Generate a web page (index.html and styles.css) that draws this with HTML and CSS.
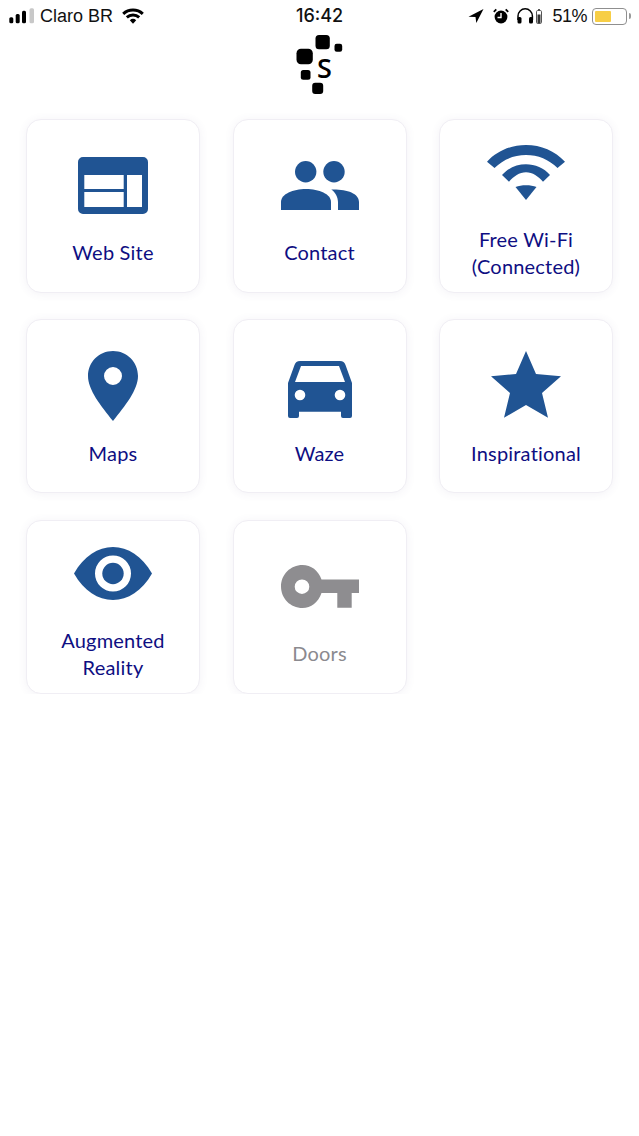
FILE: index.html
```html
<!DOCTYPE html>
<html lang="en">
<head>
  <meta charset="UTF-8" />
  <meta name="viewport" content="width=device-width, initial-scale=1.0"/>
  <title>Home</title>
  <link rel="stylesheet" href="styles.css">
</head>
<body>
  <div class="statusbar">
    <div class="status-left">
      <svg class="signal" width="25" height="16" viewBox="0 0 25 16">
        <rect x="0.300" y="9.300" width="4" height="6" rx="1.500" fill="#000"/>
        <rect x="6.700" y="6" width="4" height="9.300" rx="1.500" fill="#000"/>
        <rect x="13" y="2.700" width="4" height="12.600" rx="1.500" fill="#000"/>
        <rect x="20.500" y="0.300" width="4.500" height="15" rx="1.500" fill="#c8c8c8"/>
      </svg>
      <span class="carrier">Claro BR</span>
      <svg class="status-wifi" width="22" height="16" viewBox="0 0 22 16">
        <path d="M1.200 5.800a14.500 14.500 0 0 1 19.600 0" fill="none" stroke="#000" stroke-width="3"/>
        <path d="M4.800 9.400a9.200 9.200 0 0 1 12.400 0" fill="none" stroke="#000" stroke-width="3"/>
        <path d="M7.800 12.300a4.800 4.800 0 0 1 6.400 0L11 15.800z" fill="#000"/>
      </svg>
    </div>
    <div class="clock">16:42</div>
    <div class="status-right">
      <svg class="arrow" width="16" height="16" viewBox="0 0 16 16"><path d="M15.500 1 .5 8.700l7 .3.800 6z" fill="#000"/></svg>
      <svg class="alarm" width="16" height="16" viewBox="0 0 16 16">
        <circle cx="8" cy="9" r="6.400" fill="#000"/>
        <path d="M8 5v4.500H4.500" fill="none" stroke="#fff" stroke-width="1.400"/>
        <path d="M.8 3.800 3.300 1.300M15.200 3.800 12.700 1.300" stroke="#000" stroke-width="1.800"/>
      </svg>
      <svg class="phones" width="25" height="16" viewBox="0 0 25 16">
        <path d="M1 12V8a7.200 7.200 0 0 1 14.400 0v4" fill="none" stroke="#000" stroke-width="1.500"/>
        <rect x="0.500" y="9" width="4" height="6.500" rx="1.500" fill="#000"/>
        <rect x="12" y="9" width="4" height="6.500" rx="1.500" fill="#000"/>
        <rect x="19.500" y="2.500" width="5" height="13" rx="1.200" fill="none" stroke="#555" stroke-width="1"/>
        <rect x="21" y="1" width="2" height="1.500" fill="#555"/>
        <rect x="20.500" y="6.500" width="3" height="8.500" fill="#333"/>
      </svg>
      <span class="percent">51%</span>
      <div class="battery"><div class="battery-fill"></div></div>
      <div class="battery-cap"></div>
    </div>
  </div>

  <div class="logo">
    <svg width="50" height="62" viewBox="0 0 50 62">
      <rect x="20.500" y="1" width="14.300" height="14.300" rx="3.500" fill="#000"/>
      <rect x="39.500" y="9.700" width="7.700" height="8" rx="2.200" fill="#000"/>
      <rect x="1.500" y="14.700" width="16.300" height="15.600" rx="4.500" fill="#000"/>
      <rect x="5.800" y="36" width="9.700" height="9.700" rx="2.500" fill="#000"/>
      <rect x="17.200" y="48.700" width="11" height="11.300" rx="3" fill="#000"/>
      <text x="29.500" y="43.700" class="logo-s">S</text>
    </svg>
  </div>

  <div class="grid">
    <div class="tile">
      <div class="tile-icon">
        <svg width="70" height="57" viewBox="0 0 70 57">
          <path fill-rule="evenodd" d="M5 0h60a5 5 0 0 1 5 5v47a5 5 0 0 1-5 5H5a5 5 0 0 1-5-5V5a5 5 0 0 1 5-5zM6.300 18v14h39.400V18zM6.300 35v15h39.400V35zM49 18v32h15V18z" fill="#205493"/>
        </svg>
      </div>
      <div class="tile-label">Web Site</div>
    </div>
    <div class="tile">
      <div class="tile-icon">
        <svg width="78" height="49" viewBox="0 0 78 49">
          <circle cx="24.700" cy="10.700" r="10.700" fill="#205493"/>
          <circle cx="53" cy="10.700" r="10.700" fill="#205493"/>
          <path d="M0 49V41C0 33 12 28 25 28S50 33 50 41V49z" fill="#205493"/>
          <path d="M50.300 28.500C65 28 78 32 78 41V49H57V41C57 36 54 31 50.300 28.500z" fill="#205493"/>
        </svg>
      </div>
      <div class="tile-label">Contact</div>
    </div>
    <div class="tile tile-two">
      <div class="tile-icon">
        <svg width="78" height="55" viewBox="0 0 78 55">
          <path d="M0 16.700C10 6 24 0 39 0s29 6 39 16.700L70.500 23C62 14.500 51 10 39 10S16 14.500 7.500 23z" fill="#205493"/>
          <path d="M15 30C21 23 30 19.300 39 19.300S57 23 63 30l-7 6.700C51.500 31.500 45.500 27.300 39 27.300s-12.500 4.200-17 9.400z" fill="#205493"/>
          <path d="M28.500 42c3-1.200 6.500-1.800 10.500-1.800s7.500.6 10.500 1.800L39 55z" fill="#205493"/>
        </svg>
      </div>
      <div class="tile-label">Free Wi-Fi<br>(Connected)</div>
    </div>

    <div class="tile">
      <div class="tile-icon">
        <svg width="50" height="70" viewBox="0 0 50 70">
          <path fill-rule="evenodd" d="M25 0c14 0 25 11 25 25 0 14-13 30-25 45C13 55 0 39 0 25 0 11 11 0 25 0zM25 16a9 9 0 1 0 0 18 9 9 0 0 0 0-18z" fill="#205493"/>
        </svg>
      </div>
      <div class="tile-label">Maps</div>
    </div>
    <div class="tile">
      <div class="tile-icon">
        <svg width="64" height="64" viewBox="0 -7 64 64">
          <path fill-rule="evenodd" d="M12 0h40c3 0 4.500 1.500 5.500 4L64 22v33a2 2 0 0 1-2 2h-7a2 2 0 0 1-2-2v-4.300H11V55a2 2 0 0 1-2 2H2a2 2 0 0 1-2-2V22L6.500 4C7.500 1.500 9 0 12 0zM13 5 7 21h50L51 5zM12 28.700a5.300 5.300 0 1 0 0 10.600 5.300 5.300 0 0 0 0-10.600zM52 28.700a5.300 5.300 0 1 0 0 10.600 5.300 5.300 0 0 0 0-10.600z" fill="#205493"/>
        </svg>
      </div>
      <div class="tile-label">Waze</div>
    </div>
    <div class="tile">
      <div class="tile-icon">
        <svg width="70" height="70" viewBox="0 0 70 70">
          <path d="M35 0l10 23 25 2.300L51 42l6 24.700L35 54 13 66.700 19 42 0 25.300 25 23z" fill="#205493"/>
        </svg>
      </div>
      <div class="tile-label">Inspirational</div>
    </div>

    <div class="tile tile-two">
      <div class="tile-icon">
        <svg width="78" height="53" viewBox="0 0 78 53">
          <path fill-rule="evenodd" d="M0 26.500C10 9 24 0 39 0s29 9 39 26.500C68 44 54 53 39 53S10 44 0 26.500zM39 8.500a18 18 0 1 0 0 36 18 18 0 0 0 0-36z" fill="#205493"/>
          <circle cx="39" cy="26.500" r="10.700" fill="#205493"/>
        </svg>
      </div>
      <div class="tile-label">Augmented<br>Reality</div>
    </div>
    <div class="tile tile-off">
      <div class="tile-icon">
        <svg width="78" height="43" viewBox="0 0 78 43">
          <path fill-rule="evenodd" d="M21.500 0C30 0 37.500 5.500 40.500 14.400H78V28h-7.300v14.700H56.300V28H40.500C37.500 37 30 43 21.500 43 9.500 43 0 33.500 0 21.500S9.500 0 21.500 0zM21 14.400a7.300 7.300 0 1 0 0 14.600 7.300 7.300 0 0 0 0-14.600z" fill="#8e8d90"/>
        </svg>
      </div>
      <div class="tile-label">Doors</div>
    </div>
  </div>
</body>
</html>
```

FILE: styles.css
```css
body {
  margin: 0;
  padding: 0;
  background: #fff;
  font-family: "Lato", "Noto Sans", sans-serif;
}

.statusbar {
  height: 32px;
  padding: 0 8px 0 9px;
  display: flex;
  align-items: center;
  justify-content: space-between;
  font-family: "Liberation Sans", sans-serif;
  font-size: 18px;
  color: #111;
  position: relative;
}

.status-left, .status-right {
  display: flex;
  align-items: center;
}

.carrier {
  margin-left: 6px;
}

.status-wifi {
  margin-left: 9px;
}

.clock {
  position: absolute;
  left: 0;
  right: 0;
  top: 5px;
  text-align: center;
  font-family: "Inter", sans-serif;
  font-size: 18px;
  font-weight: 500;
}

.arrow {
  margin-right: 9px;
}

.alarm {
  margin-right: 8px;
}

.phones {
  margin-right: 10px;
}

.percent {
  margin-right: 5px;
  letter-spacing: -0.5px;
}

.battery {
  box-sizing: border-box;
  width: 35px;
  height: 17px;
  border: 1px solid #8f8f8f;
  border-radius: 4px;
  padding: 2px;
}

.battery-fill {
  width: 16px;
  height: 100%;
  background: #f7ce46;
  border-radius: 1px;
}

.battery-cap {
  width: 2px;
  height: 6px;
  margin-left: 2px;
  background: #999;
  border-radius: 0 2px 2px 0;
}

.logo {
  height: 62px;
  margin-top: 2px;
  display: flex;
  justify-content: center;
}

.logo-s {
  font-family: "Open Sans", sans-serif;
  font-size: 27px;
  font-weight: 600;
  text-anchor: middle;
  fill: #000;
}

.grid {
  margin: 22.500px 0 0 26px;
  display: grid;
  grid-template-columns: repeat(3, 174px);
  grid-auto-rows: 174px;
  column-gap: 32.500px;
  row-gap: 26.500px;
}

.tile {
  border: 1px solid #f0eef4;
  border-radius: 15px;
  box-sizing: border-box;
  background: #fff;
  box-shadow: 0 1px 10px rgba(80, 70, 130, 0.07);
  display: flex;
  flex-direction: column;
  align-items: center;
}

.tile-icon {
  height: 80px;
  margin-top: 25.500px;
  display: flex;
  align-items: center;
  justify-content: center;
}

.tile-label {
  margin-top: 14px;
  font-size: 20px;
  line-height: 27px;
  letter-spacing: 0.2px;
  text-align: center;
  color: #0e0e82;
}

.tile-two .tile-icon {
  margin-top: 12.500px;
}

.tile-two .tile-label {
  margin-top: 13.500px;
}

.tile-off .tile-label {
  color: #8b8a8f;
}
```
